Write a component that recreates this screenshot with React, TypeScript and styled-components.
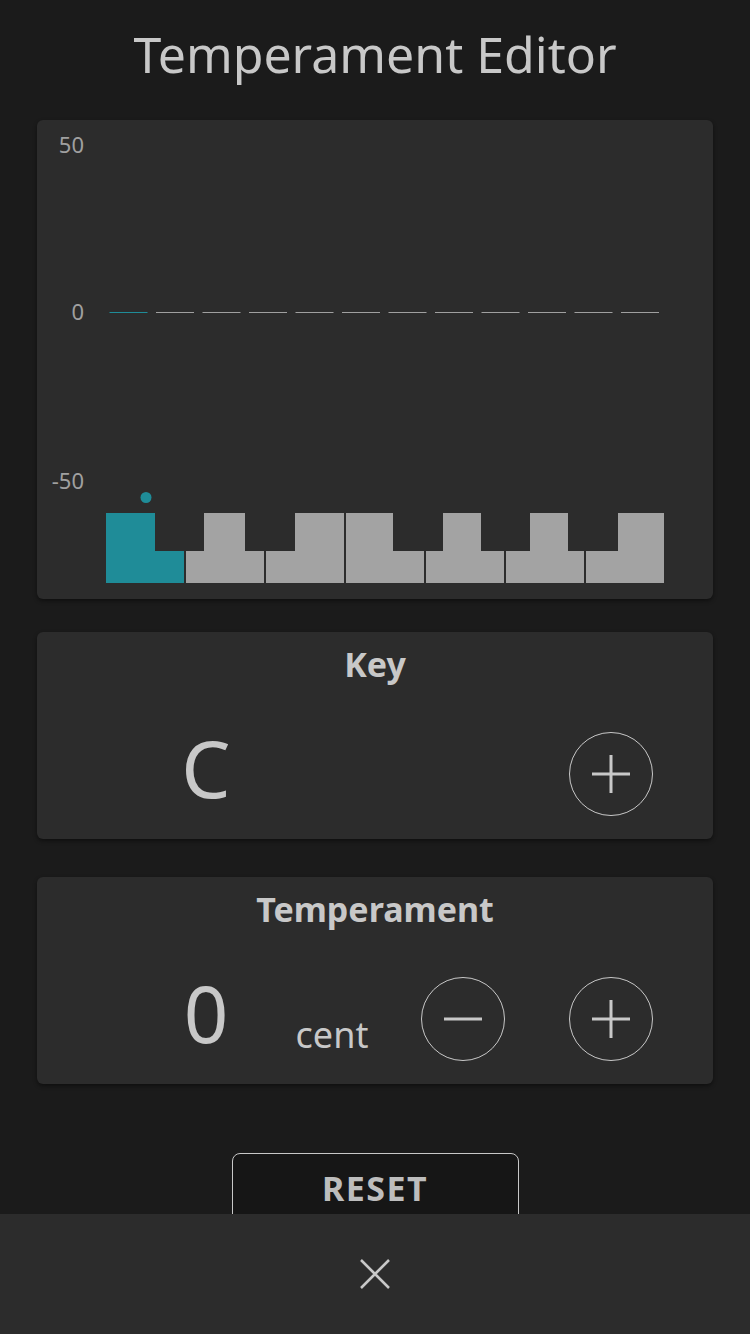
import styled, { createGlobalStyle } from 'styled-components';

const GlobalStyle = createGlobalStyle`
  html, body {
    margin: 0;
    padding: 0;
    background: #1b1b1b;
  }
  body {
    font-family: "Noto Sans", "Open Sans", sans-serif;
    color: #c8c8c8;
  }
`;

const ACCENT = '#1f8c98';
const KEY_GREY = '#a3a3a3';

// white keys of one octave, x in card coordinates: full span and the raised part
const whiteKeys = [
  { l: 69, r: 147, ul: 69, ur: 118 },
  { l: 149, r: 227, ul: 167, ur: 208 },
  { l: 229, r: 307, ul: 258, ur: 307 },
  { l: 309, r: 387, ul: 309, ur: 356 },
  { l: 389, r: 467, ul: 406, ur: 444 },
  { l: 469, r: 547, ul: 493, ur: 531 },
  { l: 549, r: 627, ul: 581, ur: 627 },
];

const KEY_TOP = 393;
const KEY_STEP = 431;
const KEY_BOTTOM = 463;
const ZERO_Y = 192;
const SEMITONE = 46.5;

const Page = styled.div`
  min-height: 1334px;
  box-sizing: border-box;
  padding: 20px 37px 140px;
`;

const Title = styled.h1`
  margin: 0 0 31px;
  font-size: 50px;
  line-height: 69px;
  font-weight: 400;
  text-align: center;
  color: #c8c8c8;
`;

const Card = styled.section<{ $gap?: number }>`
  background: #2c2c2c;
  border-radius: 6px;
  box-shadow: 0 2px 4px rgba(0, 0, 0, 0.45);
  margin-top: ${(p) => p.$gap ?? 0}px;
`;

const ChartCard = styled(Card)`
  height: 479px;
  overflow: hidden;
`;

const ControlCard = styled(Card)`
  height: 207px;
  box-sizing: border-box;
  padding-top: 9px;
`;

const CardLabel = styled.h2`
  margin: 0;
  font-size: 34px;
  line-height: 46px;
  font-weight: 700;
  text-align: center;
  color: #c8c8c8;
`;

const ControlRow = styled.div`
  display: flex;
  align-items: flex-start;
  height: 84px;
  margin-top: 45px;
  padding: 0 60px 0 109px;
`;

const Value = styled.div`
  width: 120px;
  font-size: 78px;
  line-height: 72px;
  text-align: center;
  color: #c8c8c8;
`;

const Unit = styled.div`
  width: 80px;
  margin: 34px 0 0 26px;
  font-size: 36px;
  line-height: 48px;
  text-align: center;
  color: #c8c8c8;
`;

const CircleButton = styled.button<{ $push?: boolean }>`
  width: 84px;
  height: 84px;
  flex: none;
  padding: 0;
  margin-left: ${(p) => (p.$push ? 'auto' : '49px')};
  border-radius: 50%;
  border: 1.5px solid #c8c8c8;
  background: transparent;
  display: flex;
  align-items: center;
  justify-content: center;
  cursor: pointer;
`;

const ResetWrap = styled.div`
  display: flex;
  justify-content: center;
  margin-top: 69px;
`;

const ResetButton = styled.button`
  width: 287px;
  height: 70px;
  border: 1.5px solid #c8c8c8;
  border-radius: 8px;
  background: #161616;
  color: #bdbdbd;
  font-family: "Noto Sans", sans-serif;
  font-size: 34px;
  font-weight: 700;
  letter-spacing: 1.5px;
  cursor: pointer;
`;

const BottomBar = styled.footer`
  position: fixed;
  left: 0;
  right: 0;
  bottom: 0;
  height: 120px;
  background: #2c2c2c;
  display: flex;
  align-items: center;
  justify-content: center;
`;

const CloseButton = styled.button`
  border: none;
  background: transparent;
  padding: 0;
  width: 40px;
  height: 40px;
  display: flex;
  align-items: center;
  justify-content: center;
  cursor: pointer;
`;

const PlusIcon = () => (
  <svg width="40" height="40" viewBox="0 0 40 40">
    <path d="M1 20h38M20 1v38" stroke="#c8c8c8" strokeWidth="3" fill="none" />
  </svg>
);

const MinusIcon = () => (
  <svg width="40" height="40" viewBox="0 0 40 40">
    <path d="M1 20h38" stroke="#c8c8c8" strokeWidth="3" fill="none" />
  </svg>
);

const CloseIcon = () => (
  <svg width="30" height="30" viewBox="0 0 30 30">
    <path d="M1 1l28 28M29 1L1 29" stroke="#c8c8c8" strokeWidth="2.5" fill="none" />
  </svg>
);

const keyPoints = (k: (typeof whiteKeys)[number]) =>
  [
    [k.ul, KEY_TOP],
    [k.ur, KEY_TOP],
    [k.ur, KEY_STEP],
    [k.r, KEY_STEP],
    [k.r, KEY_BOTTOM],
    [k.l, KEY_BOTTOM],
    [k.l, KEY_STEP],
    [k.ul, KEY_STEP],
  ]
    .map((p) => p.join(','))
    .join(' ');

const Chart = ({ selected }: { selected: number }) => (
  <svg width="676" height="479" viewBox="0 0 676 479">
    <g fill="#a0a0a0" fontSize="22" fontFamily="Noto Sans, sans-serif" textAnchor="end">
      <text x="47" y="33">50</text>
      <text x="47" y="200">0</text>
      <text x="47" y="369">-50</text>
    </g>
    {Array.from({ length: 12 }, (_, i) => {
      const x = 69 + i * SEMITONE + 3.5;
      return (
        <line
          key={i}
          x1={x}
          x2={x + 38}
          y1={ZERO_Y + 0.5}
          y2={ZERO_Y + 0.5}
          stroke={i === selected ? ACCENT : '#a0a0a0'}
          strokeWidth="1"
        />
      );
    })}
    {whiteKeys.map((k, i) => (
      <polygon key={i} points={keyPoints(k)} fill={i === 0 ? ACCENT : KEY_GREY} />
    ))}
    <circle cx="109" cy="377.5" r="5.5" fill={ACCENT} />
  </svg>
);

export default function App() {
  return (
    <>
      <GlobalStyle />
      <Page>
        <Title>Temperament Editor</Title>
        <ChartCard>
          <Chart selected={0} />
        </ChartCard>

        <ControlCard $gap={33}>
          <CardLabel>Key</CardLabel>
          <ControlRow>
            <Value>C</Value>
            <CircleButton $push aria-label="next key">
              <PlusIcon />
            </CircleButton>
          </ControlRow>
        </ControlCard>

        <ControlCard $gap={38}>
          <CardLabel>Temperament</CardLabel>
          <ControlRow>
            <Value>0</Value>
            <Unit>cent</Unit>
            <CircleButton aria-label="decrease">
              <MinusIcon />
            </CircleButton>
            <CircleButton $push aria-label="increase">
              <PlusIcon />
            </CircleButton>
          </ControlRow>
        </ControlCard>

        <ResetWrap>
          <ResetButton>RESET</ResetButton>
        </ResetWrap>
      </Page>
      <BottomBar>
        <CloseButton aria-label="close">
          <CloseIcon />
        </CloseButton>
      </BottomBar>
    </>
  );
}
